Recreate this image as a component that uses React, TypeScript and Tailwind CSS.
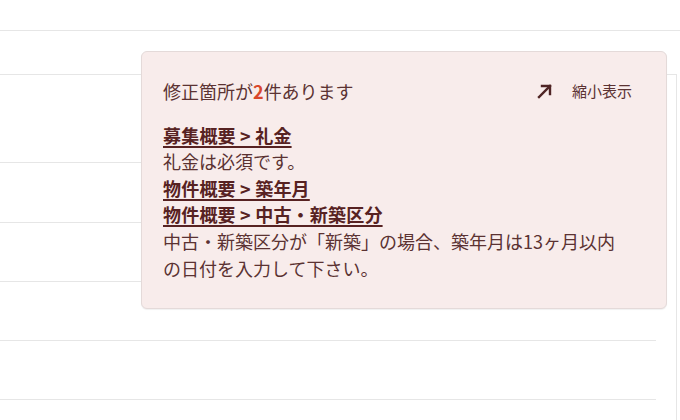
import React from 'react';

type Issue = {
  fields: string[];
  message: string;
};

const issues: Issue[] = [
  { fields: ['募集概要 > 礼金'], message: '礼金は必須です。' },
  {
    fields: ['物件概要 > 築年月', '物件概要 > 中古・新築区分'],
    message: '中古・新築区分が「新築」の場合、築年月は13ヶ月以内の日付を入力して下さい。',
  },
];

const rowHeights = ['h-[88px]', 'h-[60px]', 'h-[59px]', 'h-[59px]', 'h-[59px]'];

const ShrinkIcon: React.FC = () => (
  <svg width="18" height="18" viewBox="0 0 18 18" fill="none" stroke="#4f2424" strokeWidth="2.4" strokeLinecap="square">
    <path d="M3 15 L14 4" />
    <path d="M6 4 H14 V12" />
  </svg>
);

const App: React.FC = () => {
  return (
    <div
      className="relative h-[420px] w-[680px] overflow-hidden bg-white"
      style={{ fontFamily: '"Noto Sans CJK JP", "Noto Sans", sans-serif' }}
    >
      <div className="h-[31px] border-b border-[#e6e6e6]" />

      {/* form table behind the popover */}
      <div className="mt-[43px] w-[677px] border-t border-r border-[#e6e6e6]">
        {rowHeights.map((h, i) => (
          <div key={i} className={`${h} mr-[20px] border-b border-[#e6e6e6]`} />
        ))}
        <div className="h-[40px]" />
      </div>

      {/* error summary popover */}
      <div className="absolute left-[141px] top-[51px] w-[526px] rounded-[6px] border border-[#e4dad9] bg-[#f8eceb] pl-[21px] pr-[34px] pt-[26px] pb-[27px] text-[18px] leading-[26.6px] text-[#5b3232] shadow-[0_1px_1px_rgba(0,0,0,0.06)]">
        <div className="flex items-center justify-between">
          <p>
            修正箇所が<span className="font-bold text-[#d8472b]">2</span>件あります
          </p>
          <button type="button" className="flex items-center gap-[18px] text-[15px] text-[#5b3232]">
            <ShrinkIcon />
            <span>縮小表示</span>
          </button>
        </div>

        <div className="mt-[17px] pr-[3px]">
          {issues.map((issue, i) => (
            <div key={i}>
              {issue.fields.map((f) => (
                <div key={f}>
                  <a className="font-bold tracking-[0.2px] text-[#572222] underline decoration-[1.5px] underline-offset-[3px]">{f}</a>
                </div>
              ))}
              <p>{issue.message}</p>
            </div>
          ))}
        </div>
      </div>
    </div>
  );
};

export default App;
